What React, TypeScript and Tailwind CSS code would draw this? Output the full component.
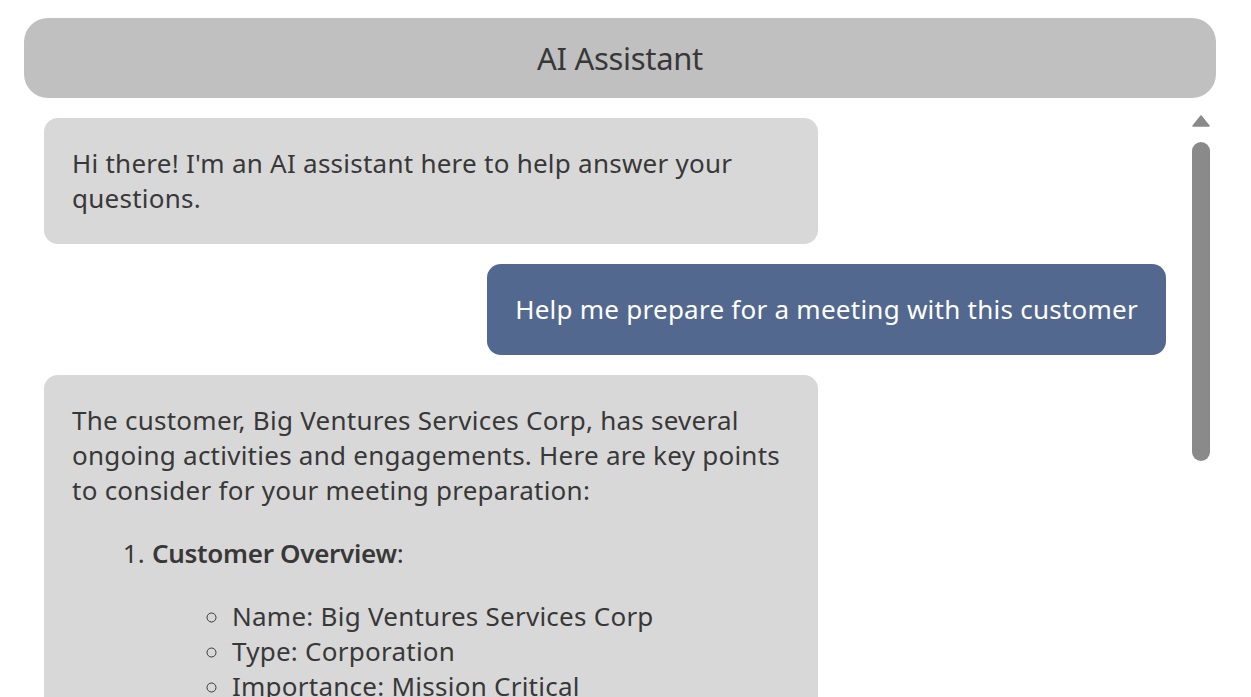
import React from 'react'

const font = { fontFamily: '"Noto Sans", "Open Sans", sans-serif' }

function Bubble({ children }: { children: React.ReactNode }) {
  return (
    <div className="w-[774px] rounded-[14px] bg-[#d8d8d8] px-[28px] py-[28px] text-[26px] leading-[35px] tracking-[0.25px] text-[#383838]">
      {children}
    </div>
  )
}

export default function App() {
  return (
    <div className="h-[697px] overflow-hidden bg-white pl-[24px] pr-[35px] pt-[18px]" style={font}>
      <header className="flex h-[80px] items-center justify-center rounded-[24px] bg-[#c0c0c0]">
        <h1 className="text-[31px] tracking-[-0.3px] text-[#383838]">AI Assistant</h1>
      </header>

      <div className="flex">
        <div className="flex flex-1 flex-col gap-[20px] px-[20px] pt-[20px]">
          <Bubble>Hi there! I'm an AI assistant here to help answer your questions.</Bubble>

          <div className="self-end rounded-[14px] bg-[#53688f] px-[28px] py-[28px] text-[26px] leading-[35px] tracking-[0.25px] text-white">
            Help me prepare for a meeting with this customer
          </div>

          <Bubble>
            <p>
              The customer, Big Ventures Services Corp, has several ongoing activities and engagements. Here are key points
              to consider for your meeting preparation:
            </p>
            <ol className="mt-[28px] list-decimal pl-[80px]">
              <li>
                <strong className="font-semibold tracking-[-0.3px]">Customer Overview</strong>:
                <ul className="mt-[28px] list-[circle] pl-[80px]">
                  <li>Name: Big Ventures Services Corp</li>
                  <li>Type: Corporation</li>
                  <li>Importance: Mission Critical</li>
                  <li>Industry: Financial Services</li>
                </ul>
              </li>
            </ol>
          </Bubble>
        </div>

        <div className="flex w-[30px] flex-col items-center pt-[17px]">
          <svg width="18" height="12" viewBox="0 0 18 12">
            <path d="M9 1 L17 11 H1 Z" fill="#8a8a8a" strokeLinejoin="round" stroke="#8a8a8a" strokeWidth="1.5" />
          </svg>
          <div className="mt-[15px] h-[319px] w-[18px] rounded-full bg-[#8a8a8a]" />
        </div>
      </div>
    </div>
  )
}
